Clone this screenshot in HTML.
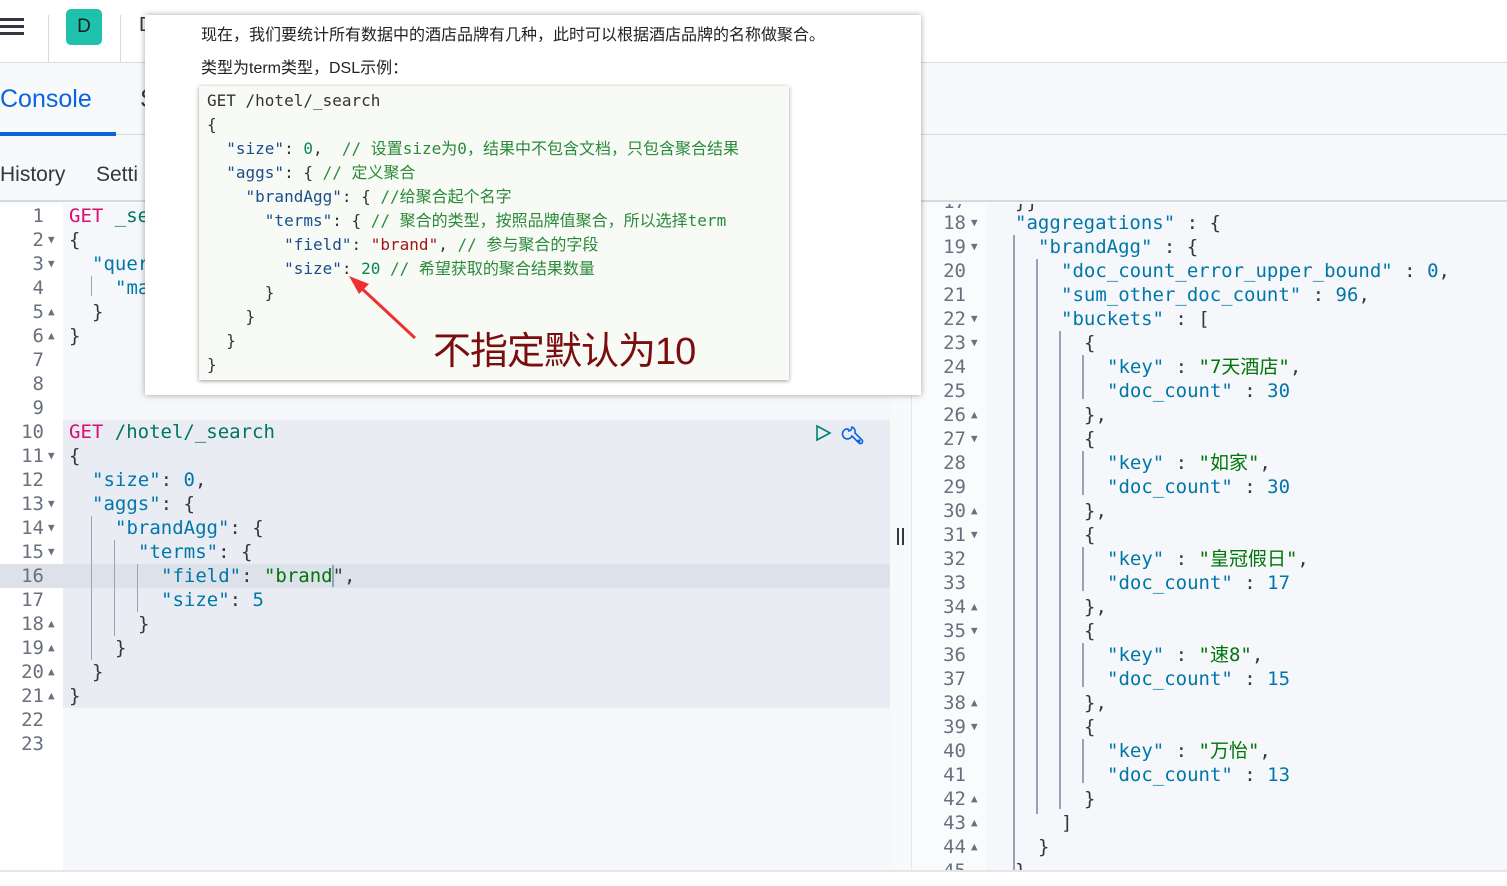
<!DOCTYPE html>
<html><head><meta charset="utf-8">
<style>
*{margin:0;padding:0;box-sizing:border-box}
body{width:1507px;height:886px;overflow:hidden;background:#f8f9fb;font-family:"Liberation Sans","Noto Sans CJK SC",sans-serif;position:relative}
.abs{position:absolute}
.mono{font-family:"DejaVu Sans Mono","Noto Sans CJK SC",monospace;font-size:19px;line-height:24px}
.ln{position:absolute;width:44px;text-align:right;color:#69707d}
.fa{position:absolute;font-size:11px;color:#69707d;line-height:24px}
.k{color:#0077aa}.s{color:#00750a}.n{color:#0077aa}.p{color:#343741}.m{color:#dd0a73}.u{color:#00755e}
.cl{position:absolute;white-space:pre}
.g{position:absolute;width:2px;background:#98a2b3}
.pc{font-family:"DejaVu Sans Mono","Noto Sans CJK SC",monospace;font-size:16px;line-height:24px;color:#333}
.pc div{white-space:pre;height:24px}
.pk{color:#1a4e8c}.pc .c{color:#2a8a3a}.ps{color:#a31515}.pn{color:#098658}
</style></head><body>
<!-- top bar -->
<div class="abs" style="left:0;top:0;width:1507px;height:63px;background:#fff;border-bottom:1px solid #d3dae6"></div>
<div class="abs" style="left:0;top:18px;width:24px;height:3px;background:#343741"></div>
<div class="abs" style="left:0;top:25px;width:24px;height:3px;background:#343741"></div>
<div class="abs" style="left:0;top:32px;width:24px;height:3px;background:#343741"></div>
<div class="abs" style="left:48px;top:15px;width:1px;height:48px;background:#d3dae6"></div>
<div class="abs" style="left:66px;top:9px;width:36px;height:36px;background:#1ec1ac;border-radius:5px;color:#1a1c21;font-size:19px;text-align:center;line-height:36px">D</div>
<div class="abs" style="left:120px;top:15px;width:1px;height:48px;background:#d3dae6"></div>
<div class="abs" style="left:139px;top:14px;font-size:20px;color:#343741">D</div>
<!-- tabs -->
<div class="abs" style="left:0;top:64px;width:1507px;height:71px;background:#f8f9fb;border-bottom:1px solid #d3dae6"></div>
<div class="abs" style="left:0;top:85px;font-size:25px;color:#0b64dd">Console</div>
<div class="abs" style="left:0;top:132px;width:116px;height:4px;background:#0b64dd"></div>
<div class="abs" style="left:140px;top:85px;font-size:25px;color:#343741">S</div>
<div class="abs" style="left:0;top:136px;width:1507px;height:66px;background:#f8f9fb;border-bottom:2px solid #d3dae6"></div>
<div class="abs" style="left:0;top:163px;font-size:21px;color:#343741">History</div>
<div class="abs" style="left:96px;top:163px;font-size:21px;color:#343741">Setti</div>
<!-- left editor -->
<div class="abs" style="left:0;top:204px;width:63px;height:666px;background:#fff"></div>
<div class="abs" style="left:63px;top:204px;width:827px;height:666px;background:#f5f7fa"></div>
<div class="abs" style="left:63px;top:420px;width:827px;height:288px;background:#e9ecf3"></div>
<div class="abs" style="left:0;top:564px;width:890px;height:24px;background:#dde1ea"></div>
<div class="mono abs" style="left:0;top:204px;width:890px;height:660px">
<div class="ln" style="top:0">1</div><div class="ln" style="top:24px">2</div><div class="ln" style="top:48px">3</div><div class="ln" style="top:72px">4</div><div class="ln" style="top:96px">5</div><div class="ln" style="top:120px">6</div><div class="ln" style="top:144px">7</div><div class="ln" style="top:168px">8</div><div class="ln" style="top:192px">9</div><div class="ln" style="top:216px">10</div><div class="ln" style="top:240px">11</div><div class="ln" style="top:264px">12</div><div class="ln" style="top:288px">13</div><div class="ln" style="top:312px">14</div><div class="ln" style="top:336px">15</div><div class="ln" style="top:360px">16</div><div class="ln" style="top:384px">17</div><div class="ln" style="top:408px">18</div><div class="ln" style="top:432px">19</div><div class="ln" style="top:456px">20</div><div class="ln" style="top:480px">21</div><div class="ln" style="top:504px">22</div><div class="ln" style="top:528px">23</div>
<div class="fa" style="left:48px;top:24px">▼</div><div class="fa" style="left:48px;top:48px">▼</div><div class="fa" style="left:48px;top:96px">▲</div><div class="fa" style="left:48px;top:120px">▲</div>
<div class="fa" style="left:48px;top:240px">▼</div><div class="fa" style="left:48px;top:288px">▼</div><div class="fa" style="left:48px;top:312px">▼</div><div class="fa" style="left:48px;top:336px">▼</div><div class="fa" style="left:48px;top:408px">▲</div><div class="fa" style="left:48px;top:432px">▲</div><div class="fa" style="left:48px;top:456px">▲</div><div class="fa" style="left:48px;top:480px">▲</div>
<div class="cl" style="left:69px;top:0"><span class="m">GET</span> <span class="u">_se</span></div>
<div class="cl p" style="left:69px;top:24px">{</div>
<div class="cl k" style="left:92px;top:48px">"quer</div>
<div class="cl k" style="left:115px;top:72px">"ma</div>
<div class="cl p" style="left:92px;top:96px">}</div>
<div class="cl p" style="left:69px;top:120px">}</div>
<div class="cl" style="left:69px;top:216px"><span class="m">GET</span> <span class="u">/hotel/_search</span></div>
<div class="cl p" style="left:69px;top:240px">{</div>
<div class="cl" style="left:92px;top:264px"><span class="k">"size"</span><span class="p">: </span><span class="n">0</span><span class="p">,</span></div>
<div class="cl" style="left:92px;top:288px"><span class="k">"aggs"</span><span class="p">: {</span></div>
<div class="cl" style="left:115px;top:312px"><span class="k">"brandAgg"</span><span class="p">: {</span></div>
<div class="cl" style="left:138px;top:336px"><span class="k">"terms"</span><span class="p">: {</span></div>
<div class="cl" style="left:161px;top:360px"><span class="k">"field"</span><span class="p">: </span><span class="s">"brand</span><span class="p">",</span></div>
<div class="cl" style="left:161px;top:384px"><span class="k">"size"</span><span class="p">: </span><span class="n">5</span></div>
<div class="cl p" style="left:138px;top:408px">}</div>
<div class="cl p" style="left:115px;top:432px">}</div>
<div class="cl p" style="left:92px;top:456px">}</div>
<div class="cl p" style="left:69px;top:480px">}</div>
</div>
<div class="g" style="left:91px;top:276px;width:1px;height:20px"></div>
<div class="g" style="left:91px;top:516px;width:1px;height:144px"></div>
<div class="g" style="left:114px;top:540px;width:1px;height:96px"></div>
<div class="g" style="left:137px;top:564px;width:1px;height:48px"></div>
<div class="abs" style="left:332px;top:565px;width:2px;height:22px;background:#98a2b3"></div>
<svg class="abs" style="left:814px;top:423px" width="54" height="24" viewBox="0 0 54 24"><path d="M3 3 L16 10 L3 17 Z" fill="none" stroke="#00806e" stroke-width="1.6"/><g fill="none" stroke="#0b64dd" stroke-width="1.6"><path d="M34 6 a5 5 0 1 0 4 7 l7 7 a2 2 0 0 0 3 -3 l-7 -7 a5 5 0 0 0 -3 -6 l-1 3 -2 1 z"/><circle cx="45" cy="18" r="0.8"/></g></svg>
<!-- divider -->
<div class="abs" style="left:897px;top:528px;width:2px;height:17px;background:#343741"></div>
<div class="abs" style="left:902px;top:528px;width:2px;height:17px;background:#343741"></div>
<div class="abs" style="left:911px;top:204px;width:1px;height:666px;background:#e4e8ef"></div>
<!-- right editor -->
<div class="abs" style="left:912px;top:204px;width:74px;height:666px;background:#fafbfd"></div>
<div class="abs" style="left:986px;top:204px;width:521px;height:666px;background:#f5f7fa"></div>
<div class="mono abs" style="left:912px;top:204px;width:595px;height:666px;overflow:hidden">
<div class="cl p" style="left:103px;top:-14px">}}</div>
<div class="ln" style="left:10px;top:-14px">17</div>
<div class="ln" style="left:10px;top:7px">18</div><div class="ln" style="left:10px;top:31px">19</div><div class="ln" style="left:10px;top:55px">20</div><div class="ln" style="left:10px;top:79px">21</div><div class="ln" style="left:10px;top:103px">22</div><div class="ln" style="left:10px;top:127px">23</div><div class="ln" style="left:10px;top:151px">24</div><div class="ln" style="left:10px;top:175px">25</div><div class="ln" style="left:10px;top:199px">26</div><div class="ln" style="left:10px;top:223px">27</div><div class="ln" style="left:10px;top:247px">28</div><div class="ln" style="left:10px;top:271px">29</div><div class="ln" style="left:10px;top:295px">30</div><div class="ln" style="left:10px;top:319px">31</div><div class="ln" style="left:10px;top:343px">32</div><div class="ln" style="left:10px;top:367px">33</div><div class="ln" style="left:10px;top:391px">34</div><div class="ln" style="left:10px;top:415px">35</div><div class="ln" style="left:10px;top:439px">36</div><div class="ln" style="left:10px;top:463px">37</div><div class="ln" style="left:10px;top:487px">38</div><div class="ln" style="left:10px;top:511px">39</div><div class="ln" style="left:10px;top:535px">40</div><div class="ln" style="left:10px;top:559px">41</div><div class="ln" style="left:10px;top:583px">42</div><div class="ln" style="left:10px;top:607px">43</div><div class="ln" style="left:10px;top:631px">44</div><div class="ln" style="left:10px;top:655px">45</div>
<div class="fa" style="left:59px;top:7px">▼</div><div class="fa" style="left:59px;top:31px">▼</div><div class="fa" style="left:59px;top:103px">▼</div><div class="fa" style="left:59px;top:127px">▼</div><div class="fa" style="left:59px;top:199px">▲</div><div class="fa" style="left:59px;top:223px">▼</div><div class="fa" style="left:59px;top:295px">▲</div><div class="fa" style="left:59px;top:319px">▼</div><div class="fa" style="left:59px;top:391px">▲</div><div class="fa" style="left:59px;top:415px">▼</div><div class="fa" style="left:59px;top:487px">▲</div><div class="fa" style="left:59px;top:511px">▼</div><div class="fa" style="left:59px;top:583px">▲</div><div class="fa" style="left:59px;top:607px">▲</div><div class="fa" style="left:59px;top:631px">▲</div>
<div class="cl" style="left:103px;top:7px"><span class="k">"aggregations"</span><span class="p"> : {</span></div>
<div class="cl" style="left:126px;top:31px"><span class="k">"brandAgg"</span><span class="p"> : {</span></div>
<div class="cl" style="left:149px;top:55px"><span class="k">"doc_count_error_upper_bound"</span><span class="p"> : </span><span class="n">0</span><span class="p">,</span></div>
<div class="cl" style="left:149px;top:79px"><span class="k">"sum_other_doc_count"</span><span class="p"> : </span><span class="n">96</span><span class="p">,</span></div>
<div class="cl" style="left:149px;top:103px"><span class="k">"buckets"</span><span class="p"> : [</span></div>
<div class="cl p" style="left:172px;top:127px">{</div>
<div class="cl" style="left:195px;top:151px"><span class="k">"key"</span><span class="p"> : </span><span class="s">"7天酒店"</span><span class="p">,</span></div>
<div class="cl" style="left:195px;top:175px"><span class="k">"doc_count"</span><span class="p"> : </span><span class="n">30</span></div>
<div class="cl p" style="left:172px;top:199px">},</div>
<div class="cl p" style="left:172px;top:223px">{</div>
<div class="cl" style="left:195px;top:247px"><span class="k">"key"</span><span class="p"> : </span><span class="s">"如家"</span><span class="p">,</span></div>
<div class="cl" style="left:195px;top:271px"><span class="k">"doc_count"</span><span class="p"> : </span><span class="n">30</span></div>
<div class="cl p" style="left:172px;top:295px">},</div>
<div class="cl p" style="left:172px;top:319px">{</div>
<div class="cl" style="left:195px;top:343px"><span class="k">"key"</span><span class="p"> : </span><span class="s">"皇冠假日"</span><span class="p">,</span></div>
<div class="cl" style="left:195px;top:367px"><span class="k">"doc_count"</span><span class="p"> : </span><span class="n">17</span></div>
<div class="cl p" style="left:172px;top:391px">},</div>
<div class="cl p" style="left:172px;top:415px">{</div>
<div class="cl" style="left:195px;top:439px"><span class="k">"key"</span><span class="p"> : </span><span class="s">"速8"</span><span class="p">,</span></div>
<div class="cl" style="left:195px;top:463px"><span class="k">"doc_count"</span><span class="p"> : </span><span class="n">15</span></div>
<div class="cl p" style="left:172px;top:487px">},</div>
<div class="cl p" style="left:172px;top:511px">{</div>
<div class="cl" style="left:195px;top:535px"><span class="k">"key"</span><span class="p"> : </span><span class="s">"万怡"</span><span class="p">,</span></div>
<div class="cl" style="left:195px;top:559px"><span class="k">"doc_count"</span><span class="p"> : </span><span class="n">13</span></div>
<div class="cl p" style="left:172px;top:583px">}</div>
<div class="cl p" style="left:149px;top:607px">]</div>
<div class="cl p" style="left:126px;top:631px">}</div>
<div class="cl p" style="left:103px;top:655px">}</div>
</div>
<div class="g" style="left:1013px;top:235px;width:2px;height:637px"></div>
<div class="g" style="left:1036px;top:259px;width:2px;height:555px"></div>
<div class="g" style="left:1059px;top:331px;width:2px;height:478px"></div>
<div class="g" style="left:1082px;top:355px;width:2px;height:44px"></div>
<div class="g" style="left:1082px;top:451px;width:2px;height:44px"></div>
<div class="g" style="left:1082px;top:547px;width:2px;height:44px"></div>
<div class="g" style="left:1082px;top:643px;width:2px;height:44px"></div>
<div class="g" style="left:1082px;top:739px;width:2px;height:44px"></div>
<div class="abs" style="left:0;top:870px;width:1507px;height:16px;background:#fff;border-top:2px solid #e4e6ea"></div>
<!-- popup -->
<div class="abs" style="left:145px;top:15px;width:776px;height:380px;background:#fff;box-shadow:0 0 6px rgba(0,0,0,.35)"></div>
<div class="abs" style="left:201px;top:21px;font-size:16px;color:#222">现在，我们要统计所有数据中的酒店品牌有几种，此时可以根据酒店品牌的名称做聚合。</div>
<div class="abs" style="left:201px;top:54px;font-size:16px;color:#222">类型为term类型，DSL示例：</div>
<div class="abs" style="left:199px;top:86px;width:590px;height:294px;background:#f8faf6;box-shadow:0 1px 4px rgba(0,0,0,.4)"></div>
<div class="pc abs" style="left:207px;top:89px"><div>GET /hotel/_search</div><div>{</div><div>  <span class="pk">"size"</span>: <span class="pn">0</span>,  <span class="c">// 设置size为0，结果中不包含文档，只包含聚合结果</span></div><div>  <span class="pk">"aggs"</span>: { <span class="c">// 定义聚合</span></div><div>    <span class="pk">"brandAgg"</span>: { <span class="c">//给聚合起个名字</span></div><div>      <span class="pk">"terms"</span>: { <span class="c">// 聚合的类型，按照品牌值聚合，所以选择term</span></div><div>        <span class="pk">"field"</span>: <span class="ps">"brand"</span>, <span class="c">// 参与聚合的字段</span></div><div>        <span class="pk">"size"</span>: <span class="pn">20</span> <span class="c">// 希望获取的聚合结果数量</span></div><div>      }</div><div>    }</div><div>  }</div><div>}</div></div>
<svg class="abs" style="left:345px;top:272px" width="75" height="70"><path d="M70 66 L12 12" stroke="#f03030" stroke-width="3"/><path d="M4 4 L24 12 L14 22 Z" fill="#f03030"/></svg>
<div class="abs" style="left:433px;top:320px;font-size:38px;color:#7a0d0d;letter-spacing:-1px">不指定默认为10</div>
</body></html>
